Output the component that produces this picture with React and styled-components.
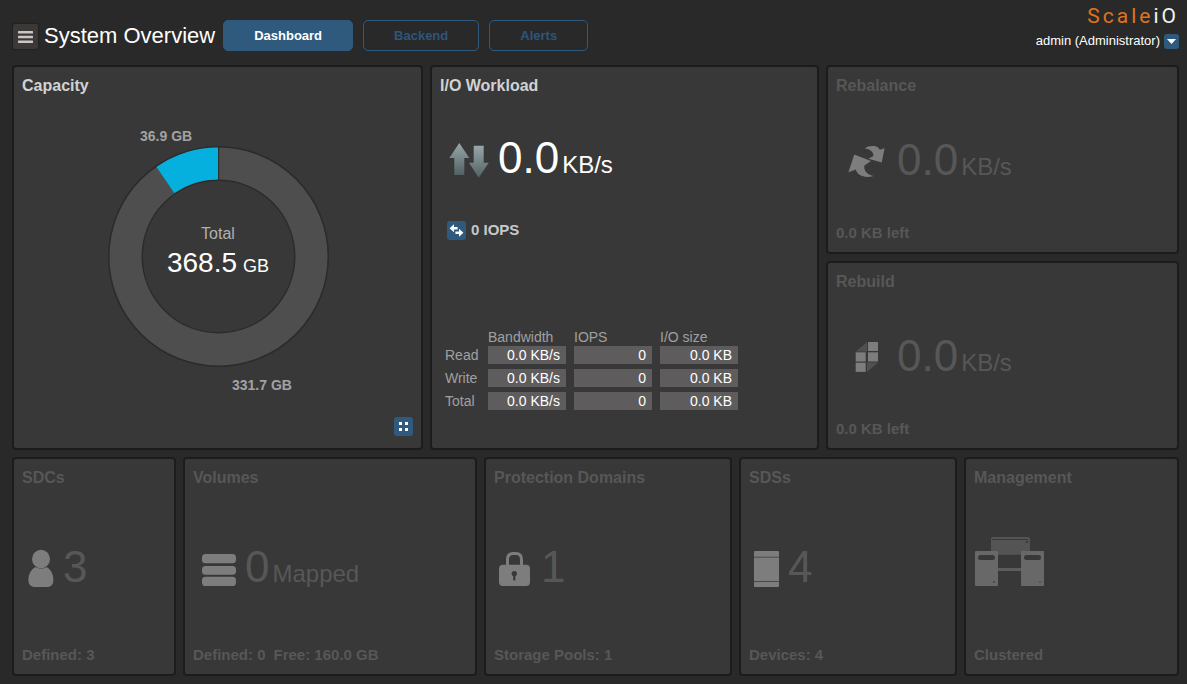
import React from "react";
import styled, { createGlobalStyle } from "styled-components";

const GlobalStyle = createGlobalStyle`
  * { box-sizing: border-box; }
  body {
    margin: 0;
    background: #292929;
    color: #fff;
    font-family: "Liberation Sans", Arial, sans-serif;
  }
  h1, h2, p { margin: 0; }
  button { font-family: inherit; cursor: pointer; }
  svg { display: block; flex: none; }
`;

const Page = styled.div`
  min-height: 100vh;
  display: flex;
  flex-direction: column;
`;

const Header = styled.header`
  display: flex;
  justify-content: space-between;
  align-items: flex-start;
  padding: 5px 8px 13px 13px;
`;

const HeaderLeft = styled.div`
  display: flex;
  align-items: flex-start;
  padding-top: 15px;
`;

const MenuButton = styled.button`
  display: grid;
  place-items: center;
  width: 25px;
  height: 25px;
  margin-top: 4px;
  padding: 0;
  border: 0;
  border-radius: 2px;
  background: #3b3838;
  box-shadow: 0 0 1px 1px #222;
`;

const PageTitle = styled.h1`
  padding: 0 8px 0 6px;
  font-size: 22px;
  line-height: 32px;
  font-weight: 400;
`;

const Tabs = styled.nav`
  display: flex;
  gap: 10px;
`;

const Tab = styled.button`
  height: 31px;
  padding: 0 30px;
  border: 1px solid #2f5a7e;
  border-radius: 5px;
  background: ${(p) => (p.$active ? "#2f5a7e" : "transparent")};
  color: ${(p) => (p.$active ? "#fff" : "#2d567a")};
  font-size: 13px;
  font-weight: 700;
`;

const HeaderRight = styled.div`
  display: flex;
  flex-direction: column;
  align-items: flex-end;
  gap: 6px;
`;

const Logo = styled.div`
  font-family: Roboto, "Liberation Sans", sans-serif;
  font-size: 21px;
  line-height: 22px;
  font-weight: 400;
  letter-spacing: 3px;
  color: #e0731d;
`;

const LogoTail = styled.span`
  color: #f2f2f2;
`;

const UserRow = styled.div`
  display: flex;
  align-items: center;
  gap: 4px;
  font-size: 13px;
  line-height: 16px;
`;

const IconButton = styled.button`
  display: grid;
  place-items: center;
  width: ${(p) => p.$size}px;
  height: ${(p) => p.$size}px;
  padding: 0;
  border: 0;
  border-radius: 3px;
  background: #2f5a7e;
`;

const Main = styled.main`
  flex: 1;
  display: grid;
  grid-template-rows: 385fr 219fr;
  gap: 7px;
  padding: 0 8px 8px 12px;
`;

const TopRow = styled.div`
  display: grid;
  grid-template-columns: 411fr 389fr 353fr;
  gap: 7px;
`;

const SideColumn = styled.div`
  display: grid;
  grid-template-rows: 1fr 1fr;
  gap: 7px;
`;

const BottomRow = styled.div`
  display: grid;
  grid-template-columns: 164fr 294fr 248fr 218fr 215fr;
  gap: 7px;
`;

const Panel = styled.section`
  display: flex;
  flex-direction: column;
  min-width: 0;
  padding: 8px 8px 9px;
  border: 2px solid #1c1c1c;
  border-radius: 4px;
  background: #383838;
  color: ${(p) => (p.$dim ? "#575757" : "#fff")};
`;

const PanelTitle = styled.h2`
  font-size: 16px;
  line-height: 22px;
  font-weight: 700;
  color: ${(p) => (p.$dim ? "#575757" : "#d2d2d2")};
`;

const PanelFooter = styled.p`
  display: flex;
  gap: 8px;
  font-size: 15px;
  line-height: 20px;
  font-weight: 700;
`;

const PanelBody = styled.div`
  flex: 1;
  display: flex;
  flex-direction: column;
  justify-content: center;
`;

const MetricRow = styled.div`
  display: flex;
  align-items: center;
  gap: 9px;
  height: 50px;
  padding-left: ${(p) => p.$indent}px;
`;

const MetricText = styled.div`
  display: flex;
  align-items: baseline;
  gap: 3px;
  white-space: nowrap;
`;

const MetricValue = styled.span`
  font-size: 44px;
  line-height: 50px;
`;

const MetricUnit = styled.span`
  font-size: 24px;
  line-height: 24px;
`;

const ChartArea = styled.div`
  flex: 1;
  display: grid;
  place-items: center;
`;

const CapacityActions = styled.div`
  display: flex;
  justify-content: flex-end;
  padding-bottom: 3px;
`;

const Workload = styled.div`
  flex: 1;
  display: flex;
  flex-direction: column;
  padding-top: 36px;
`;

const IopsRow = styled.div`
  display: flex;
  align-items: center;
  gap: 5px;
  margin-top: 37px;
  padding-left: 7px;
  color: #c8c8c8;
  font-size: 15px;
  line-height: 20px;
  font-weight: 700;
`;

const StatsTable = styled.table`
  align-self: flex-start;
  margin: auto 0 24px 5px;
  table-layout: fixed;
  width: 301px;
  border-collapse: collapse;
  font-size: 14px;
  line-height: 18px;

  th, td { padding: 0 8px 5px 0; }
  th {
    font-weight: 400;
    text-align: left;
    white-space: nowrap;
    color: #a0a0a0;
  }
  thead th, thead td { padding-bottom: 0; }
  thead td { width: 43px; }
  tbody th { padding-right: 0; }
`;

const StatValue = styled.div`
  padding-right: 6px;
  background: #5f5c5d;
  color: #fff;
  text-align: right;
`;

const DIM_ICON = "#7d7d7d";
const PANEL_BG = "#383838";

const RebalanceIcon = () => (
  <svg width="40" height="34" viewBox="0 0 40 34" fill={DIM_ICON} aria-hidden="true">
    <path d="M36.6 5.2 33.7 19.4 20.5 15.8 25.4 13C26 9.5 22 6 16.7 5.6 19 3.2 24 2.6 28 3.4 30 4 31 5 31.8 6.8Z" />
    <path d="M6.3 11.6 23 18 16.4 22.4C15.4 27.5 19 31.6 25.6 33 17 35.5 9.6 33 7.8 26.6L.4 29.2Z" />
  </svg>
);

const RebuildIcon = () => (
  <svg width="40" height="34" viewBox="0 0 40 34" aria-hidden="true">
    <path d="M8 12.5 19 3V12.5ZM19 23.6H30L19 33Z" fill="#505050" />
    <g fill={DIM_ICON}>
      <rect x="20" y="3" width="10" height="9" />
      <rect x="7.7" y="13.3" width="10" height="9.2" />
      <rect x="20" y="13.3" width="10" height="9.2" />
      <rect x="7.7" y="23.7" width="10" height="9.2" />
    </g>
  </svg>
);

const PersonIcon = () => (
  <svg width="26" height="40" viewBox="0 0 26 40" fill={DIM_ICON} aria-hidden="true">
    <ellipse cx="13" cy="12" rx="9" ry="9.2" />
    <path d="M7.5 20C3 22.5.4 27 .4 33C.4 37.5 3 40 7 40H19C23 40 25.4 37.5 25.4 33C25.4 27 23 22.5 18.5 20 15 22 11 22 7.5 20Z" />
  </svg>
);

const VolumesIcon = () => (
  <svg width="34" height="38" viewBox="0 0 34 38" fill={DIM_ICON} aria-hidden="true">
    <rect y="6" width="34" height="9.3" rx="3.6" />
    <rect y="18" width="34" height="8.8" rx="3.6" />
    <rect y="28.7" width="34" height="9.3" rx="3.6" />
  </svg>
);

const LockIcon = () => (
  <svg width="33" height="38" viewBox="0 0 33 38" aria-hidden="true">
    <path d="M8.5 18V11.5C8.5 7.5 10.5 5.5 14 5.5H17C20.5 5.5 22.5 7.5 22.5 11.5V18" fill="none" stroke={DIM_ICON} strokeWidth="3" />
    <rect y="16.7" width="31" height="21.3" rx="4" fill={DIM_ICON} />
    <circle cx="15.3" cy="25.6" r="2.7" fill={PANEL_BG} />
    <rect x="14.2" y="26" width="2.2" height="6.4" fill={PANEL_BG} />
  </svg>
);

const ServerIcon = () => (
  <svg width="25" height="40" viewBox="0 0 25 40" aria-hidden="true">
    <rect y="4" width="25" height="36" rx="1" fill={DIM_ICON} />
    <path d="M0 10.2H25M0 34.5H25" stroke="#4a4a4a" />
  </svg>
);

const ClusterIcon = () => (
  <svg width="70" height="60" viewBox="0 0 70 60" role="img" aria-label="Cluster">
    <rect x="17" y="0" width="39" height="17.7" rx="1.5" fill="#545454" />
    <path d="M18 2.5H54" stroke={PANEL_BG} />
    <rect x="52" y="4" width="2" height="2" fill={PANEL_BG} />
    <rect x="24" y="31" width="23" height="3" fill="#5c5c5c" />
    <rect x="1" y="14" width="23" height="35" rx="1" fill="#686868" />
    <rect x="47" y="14" width="23" height="35" rx="1" fill="#686868" />
    <rect x="4" y="18" width="17" height="5" rx="2.5" fill={PANEL_BG} />
    <rect x="50" y="18" width="17" height="5" rx="2.5" fill={PANEL_BG} />
    <rect x="19" y="44" width="2" height="2" fill="#4a4a4a" />
    <rect x="65" y="44" width="2" height="2" fill="#565656" />
  </svg>
);

const TrafficIcon = () => (
  <svg width="41" height="40" viewBox="0 0 41 40" aria-hidden="true">
    <defs>
      <linearGradient id="traffic" x1="0" y1="0" x2="0" y2="1">
        <stop offset="0" stopColor="#98a7aa" />
        <stop offset="1" stopColor="#526264" />
      </linearGradient>
    </defs>
    <path d="M11.3 5 21.3 20H16.3V37H6.3V20H1.3Z" fill="url(#traffic)" />
    <path d="M25.7 7.7H35.7V24.7H40.7L30.7 39.7 21 24.7H25.7Z" fill="url(#traffic)" />
  </svg>
);

const SwapIcon = () => (
  <svg width="15" height="15" viewBox="0 0 15 15" fill="#fff" aria-hidden="true">
    <path d="M.6 5.2 5 1.2V4H8.6V6.4H5V9.2Z" />
    <path d="M14.4 9.8 10 5.8V8.6H6.4V11H10V13.8Z" />
  </svg>
);

const CapacityChart = () => (
  <svg width="241" height="270" viewBox="0 0 241 270" role="img" aria-label="Capacity chart" fontFamily="Liberation Sans, Arial, sans-serif">
    <circle cx="121.5" cy="134.5" r="93" fill="none" stroke="#2b2b2b" strokeWidth="35" />
    <circle cx="121.5" cy="134.5" r="93" fill="none" stroke="#4e4e4f" strokeWidth="32" />
    <path d="M121 25.5A109 109 0 0 0 59.5 45L77.3 71A77 77 0 0 1 121 57.5Z" fill="#06b0de" />
    <path d="M121.7 25V58" stroke="#2b2b2b" />
    <g fill="#a2a2a2" fontSize="14" fontWeight="700">
      <text x="43" y="19">36.9 GB</text>
      <text x="135" y="268">331.7 GB</text>
    </g>
    <g textAnchor="middle">
      <text x="121" y="117" fontSize="16" fill="#b0b0b0">Total</text>
      <text x="121" y="150" fontSize="28" fill="#fff">
        368.5<tspan fontSize="18" dx="6">GB</tspan>
      </text>
    </g>
  </svg>
);

const stats = [
  ["Read", "0.0 KB/s", "0", "0.0 KB"],
  ["Write", "0.0 KB/s", "0", "0.0 KB"],
  ["Total", "0.0 KB/s", "0", "0.0 KB"],
];

const Metric = ({ icon, indent, value, unit }) => (
  <MetricRow $indent={indent}>
    {icon}
    {value && (
      <MetricText>
        <MetricValue>{value}</MetricValue>
        {unit && <MetricUnit>{unit}</MetricUnit>}
      </MetricText>
    )}
  </MetricRow>
);

const DimPanel = ({ title, footer, ...metric }) => (
  <Panel $dim>
    <PanelTitle $dim>{title}</PanelTitle>
    <PanelBody>
      <Metric {...metric} />
    </PanelBody>
    <PanelFooter>
      {footer.map((text) => (
        <span key={text}>{text}</span>
      ))}
    </PanelFooter>
  </Panel>
);

export default function App() {
  return (
    <Page>
      <GlobalStyle />
      <Header>
        <HeaderLeft>
          <MenuButton aria-label="Menu">
            <svg width="15" height="12" viewBox="0 0 15 12" fill="#cbc5c6" aria-hidden="true">
              <rect width="15" height="2.6" rx="0.5" />
              <rect y="4.7" width="15" height="2.6" rx="0.5" />
              <rect y="9.4" width="15" height="2.6" rx="0.5" />
            </svg>
          </MenuButton>
          <PageTitle>System Overview</PageTitle>
          <Tabs>
            <Tab $active>Dashboard</Tab>
            <Tab>Backend</Tab>
            <Tab>Alerts</Tab>
          </Tabs>
        </HeaderLeft>
        <HeaderRight>
          <Logo>
            Scale<LogoTail>iO</LogoTail>
          </Logo>
          <UserRow>
            <span>admin (Administrator)</span>
            <IconButton $size={15} aria-label="User menu">
              <svg width="9" height="5" viewBox="0 0 9 5" fill="#fff" aria-hidden="true">
                <path d="M0 0H9L4.5 5Z" />
              </svg>
            </IconButton>
          </UserRow>
        </HeaderRight>
      </Header>
      <Main>
        <TopRow>
          <Panel>
            <PanelTitle>Capacity</PanelTitle>
            <ChartArea>
              <CapacityChart />
            </ChartArea>
            <CapacityActions>
              <IconButton $size={19} aria-label="Capacity details">
                <svg width="9" height="9" viewBox="0 0 9 9" fill="#fff" aria-hidden="true">
                  <path d="M0 0H3V3H0ZM6 0H9V3H6ZM0 6H3V9H0ZM6 6H9V9H6Z" />
                </svg>
              </IconButton>
            </CapacityActions>
          </Panel>
          <Panel>
            <PanelTitle>I/O Workload</PanelTitle>
            <Workload>
              <Metric icon={<TrafficIcon />} indent={8} value="0.0" unit="KB/s" />
              <IopsRow>
                <IconButton $size={19} aria-label="Switch to IOPS">
                  <SwapIcon />
                </IconButton>
                <span>0 IOPS</span>
              </IopsRow>
              <StatsTable>
                <thead>
                  <tr>
                    <td />
                    <th scope="col">Bandwidth</th>
                    <th scope="col">IOPS</th>
                    <th scope="col">I/O size</th>
                  </tr>
                </thead>
                <tbody>
                  {stats.map(([label, ...values]) => (
                    <tr key={label}>
                      <th scope="row">{label}</th>
                      {values.map((value, i) => (
                        <td key={i}>
                          <StatValue>{value}</StatValue>
                        </td>
                      ))}
                    </tr>
                  ))}
                </tbody>
              </StatsTable>
            </Workload>
          </Panel>
          <SideColumn>
            <DimPanel title="Rebalance" icon={<RebalanceIcon />} indent={12} value="0.0" unit="KB/s" footer={["0.0 KB left"]} />
            <DimPanel title="Rebuild" icon={<RebuildIcon />} indent={12} value="0.0" unit="KB/s" footer={["0.0 KB left"]} />
          </SideColumn>
        </TopRow>
        <BottomRow>
          <DimPanel title="SDCs" icon={<PersonIcon />} indent={6} value="3" footer={["Defined: 3"]} />
          <DimPanel title="Volumes" icon={<VolumesIcon />} indent={9} value="0" unit="Mapped" footer={["Defined: 0", "Free: 160.0 GB"]} />
          <DimPanel title="Protection Domains" icon={<LockIcon />} indent={5} value="1" footer={["Storage Pools: 1"]} />
          <DimPanel title="SDSs" icon={<ServerIcon />} indent={5} value="4" footer={["Devices: 4"]} />
          <DimPanel title="Management" icon={<ClusterIcon />} indent={0} footer={["Clustered"]} />
        </BottomRow>
      </Main>
    </Page>
  );
}
